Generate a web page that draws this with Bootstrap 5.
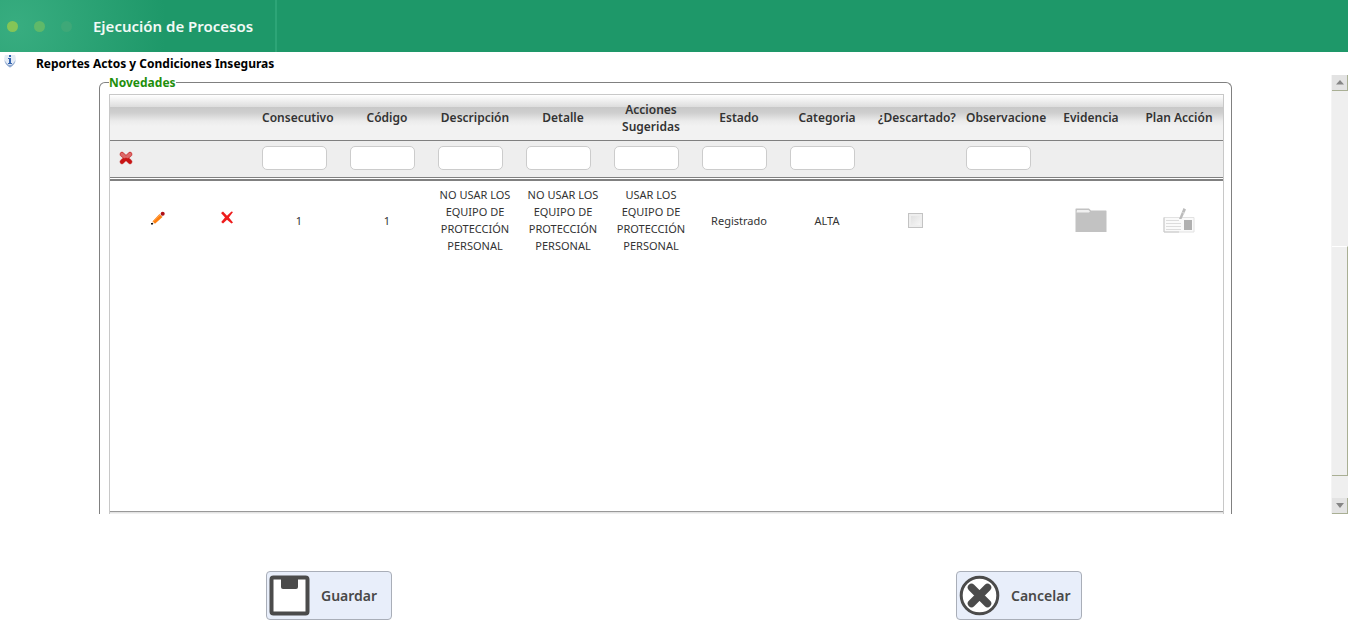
<!DOCTYPE html>
<html lang="es">
<head>
<meta charset="utf-8">
<meta name="viewport" content="width=device-width, initial-scale=1">
<title>Ejecución de Procesos</title>
<link href="https://cdn.jsdelivr.net/npm/bootstrap@5.3.0/dist/css/bootstrap.min.css" rel="stylesheet">
<style>
  body { font-family: "Noto Sans", sans-serif; font-size: 11px; line-height: 17px; color: #333; background: #fff; }
  .topbar { height: 52px; background: radial-gradient(circle at 16px 26px, #38ad80 0, #1e9869 150px); }
  .topbar-brand { width: 277px; border-right: 2px solid #2da577; }
  .topbar-title { font-size: 15px; line-height: 20px; font-weight: 600; color: #f2faf6; margin-left: 20px; }
  .page-strip { height: 23px; }
  .page-title { font-size: 12px; line-height: 17px; font-weight: 700; color: #000; margin: 0 0 0 20px; }
  .scroll-view { padding: 0 99px; min-width: 0; }
  .group { border: 1px solid #808080; border-bottom: 0; border-radius: 6px 6px 0 0; padding: 0 7px 0 9px; margin-top: -1px; }
  .group legend { float: none; width: auto; font-size: 12px; line-height: 17px; font-weight: 700; color: #1f8f0c; padding: 0; margin: 0 0 3px; }
  .grid-box { border: 1px solid #c8c8c8; border-bottom: 0; }
  .grid-end { height: 3px; border-top: 1px solid #999; background: linear-gradient(#ddd, #f8f8f8); }
  .grid-table { table-layout: fixed; width: 100%; border-collapse: separate; border-spacing: 0; text-align: center; }
  .grid-table th, .grid-table td { padding: 0 7px; vertical-align: middle; }
  .col-edit { width: 70px; }
  .col-remove { width: 75px; }
  .grid-head { background: linear-gradient(#fff 0, #ddd 12px, #c8c8c8 12px, #cfcfcf 18px, #ebebeb 26px, #f2f2f2 31px); }
  .grid-head th { height: 46px; border-bottom: 1px solid #808080; font-size: 12px; font-weight: 600; }
  .grid-head .one-line { white-space: nowrap; text-align: left; padding-right: 0; }
  .grid-filter td { height: 37px; background: #eee; border-bottom: 1px solid #808080; text-align: left; padding-bottom: 2px; }
  .grid-filter .clear-cell { padding-left: 9px; }
  .grid-filter input { display: block; width: 65px; height: 24px; padding: 0 6px; font-size: 11px; border: 1px solid #ccc; border-radius: 5px; }
  .grid-row td { height: 78px; }
  .grid-row .tool-cell { padding: 0 0 4px 41px; text-align: left; }
  .grid-body { border-top: 2px solid #808080; margin-top: 1px; }
  .icon-btn { display: block; padding: 0; border: 0; background: none; line-height: 0; }
  .tick { appearance: none; display: block; width: 15px; height: 15px; margin: 0 auto; border: 1px solid #c3c3c3; background: linear-gradient(135deg, #dcdcdc, #fafafa); box-shadow: inset 0 0 0 2px #eee; }
  .rail { width: 17px; background: #efefef; border-left: 1px solid #f4f4f4; }
  .rail-btn, .rail-thumb { border: solid #a9af94; border-width: 0 1px 1px 0; background: #e3e3e3; }
  .rail-btn { height: 16px; padding: 0; }
  .rail-thumb { height: 230px; margin-bottom: 22px; background: #efefef; border-top: 1px solid #fff; }
  .action-bar { height: 126px; padding: 57px 266px 0; }
  .action-btn { width: 126px; height: 49px; padding: 0 0 0 2px; border: 1px solid #a9aeb8; border-radius: 4px; background: #e8eefa; color: #484848; font-size: 14px; line-height: 20px; font-weight: 600; gap: 11px; }
</style>
</head>
<body class="d-flex flex-column min-vh-100">

<header class="topbar d-flex">
  <div class="topbar-brand d-flex align-items-center flex-shrink-0">
    <svg class="flex-shrink-0" width="73" height="12" aria-hidden="true">
      <circle cx="12.500" cy="6.500" r="5.500" fill="#84c557"/>
      <circle cx="39.500" cy="6.500" r="5.500" fill="#5fb969"/>
      <circle cx="66.500" cy="6.500" r="5.500" fill="#3ea878"/>
    </svg>
    <span class="topbar-title">Ejecución de Procesos</span>
  </div>
</header>

<div class="page-strip d-flex align-items-center">
  <svg class="ms-1 mb-1" width="12" height="13" viewBox="0 0 12 13" aria-hidden="true">
    <path d="M1 0Q-1 5 1.500 9Q4 11 6 13Q8 11 10.500 9Q13 5 11 0Z" fill="#e4ecf6"/>
    <path d="M.5 5Q1 10 6 12.500Q11 10 11.500 5Q9 10 6 10Q3 10 .5 5Z" fill="#8fa8cf"/>
    <path d="M5 0H7V2H5ZM4 3H7V8H8V9H4V8H5V4H4Z" fill="#3565b0"/>
  </svg>
  <h1 class="page-title">Reportes Actos y Condiciones Inseguras</h1>
</div>

<main class="flex-grow-1 d-flex">
  <div class="scroll-view flex-grow-1 d-flex flex-column">
    <fieldset class="group flex-grow-1 d-flex flex-column">
      <legend>Novedades</legend>
      <div class="grid-box flex-grow-1 d-flex flex-column">
        <table class="grid-table">
          <colgroup><col class="col-edit"><col class="col-remove"><col span="11"></colgroup>
          <thead>
            <tr class="grid-head">
              <th colspan="2"></th>
              <th class="one-line">Consecutivo</th>
              <th>Código</th>
              <th class="px-0">Descripción</th>
              <th>Detalle</th>
              <th>Acciones Sugeridas</th>
              <th>Estado</th>
              <th>Categoria</th>
              <th class="one-line">¿Descartado?</th>
              <th class="one-line">Observacione</th>
              <th>Evidencia</th>
              <th class="px-0">Plan Acción</th>
            </tr>
            <tr class="grid-filter">
              <td colspan="2" class="clear-cell">
                <button class="icon-btn" type="button" aria-label="Limpiar filtros">
                  <svg width="14" height="14" viewBox="0 0 14 14"><path d="M3 3.200 11 10.800M11 3.200 3 10.800" stroke="#d8a0a0" stroke-width="5" stroke-linecap="round"/><path d="M3 3.200 11 10.800M11 3.200 3 10.800" stroke="#c81414" stroke-width="4" stroke-linecap="round"/><path d="M3 3.200 5.500 5.500M11 3.200 8.500 5.500" stroke="#dc6a6a" stroke-width="3.400" stroke-linecap="round"/></svg>
                </button>
              </td>
              <td><input type="text" aria-label="Consecutivo"></td>
              <td><input type="text" aria-label="Código"></td>
              <td><input type="text" aria-label="Descripción"></td>
              <td><input type="text" aria-label="Detalle"></td>
              <td><input type="text" aria-label="Acciones Sugeridas"></td>
              <td><input type="text" aria-label="Estado"></td>
              <td><input type="text" aria-label="Categoria"></td>
              <td></td>
              <td><input type="text" aria-label="Observaciones"></td>
              <td></td>
              <td></td>
            </tr>
          </thead>
        </table>
        <div class="grid-body flex-grow-1">
          <table class="grid-table">
            <colgroup><col class="col-edit"><col class="col-remove"><col span="11"></colgroup>
            <tbody>
              <tr class="grid-row">
                <td class="tool-cell">
                  <button class="icon-btn" type="button" aria-label="Editar">
                    <svg width="14" height="16" viewBox="0 0 14 16"><path d="M1.500 11.500 8.500 4 11.500 7 4 13.800Z" fill="#ff7f0e"/><path d="M2 11.500 9 5" stroke="#ffa550" stroke-width="1"/><path d="M1.500 11.500 4 13.800 .5 14Z" fill="#ead9c8"/><path d="M0 13H2V14.500H0Z" fill="#111"/><path d="M8.500 4 10.300 3 12.500 5.500 11.500 7Z" fill="#ddd"/><circle cx="11.700" cy="3.800" r="2" fill="#b01016"/></svg>
                  </button>
                </td>
                <td class="tool-cell">
                  <button class="icon-btn" type="button" aria-label="Eliminar">
                    <svg width="12" height="16" viewBox="0 0 12 16"><path d="M0 3 2 1.500 6 5.800 10.500 1.500 12 2 7.900 7.500 12 12.500 10.500 13.500 6 9.700 2 13.500 .2 12 4 7.500Z" fill="#ee1c1c"/></svg>
                  </button>
                </td>
                <td>1</td>
                <td>1</td>
                <td>NO USAR LOS EQUIPO DE PROTECCIÓN PERSONAL</td>
                <td>NO USAR LOS EQUIPO DE PROTECCIÓN PERSONAL</td>
                <td>USAR LOS EQUIPO DE PROTECCIÓN PERSONAL</td>
                <td>Registrado</td>
                <td>ALTA</td>
                <td><input class="tick" type="checkbox" disabled aria-label="¿Descartado?"></td>
                <td></td>
                <td>
                  <button class="icon-btn mx-auto" type="button" aria-label="Evidencia">
                    <svg width="32" height="25" viewBox="0 0 32 25"><path d="M.5 4V1Q.5.5 1 .5H14L16 2.500H31Q31.500 2.500 31.500 3V24H.5Z" fill="#c2c2c2"/><path d="M2 2H13.500L15 3.500 14 4.500H1.500Z" fill="#f0f0f0"/></svg>
                  </button>
                </td>
                <td>
                  <button class="icon-btn mx-auto" type="button" aria-label="Plan Acción">
                    <svg width="32" height="26" viewBox="0 0 32 26"><path d="M1 10.500H31V25H1Z" fill="#fafafa" stroke="#e2e2e2"/><path d="M1 10.500V25H16" fill="none" stroke="#c8c8c8"/><path d="M3 13.500H16M3 16.500H18M3 19.500H18M3 22.500H18" stroke="#dcdcdc"/><path d="M21 13H29V23H21Z" fill="#b0b0b0"/><path d="M16 12 20.500 1 23 2.500 18.500 12Z" fill="#bcbcbc"/><path d="M19.500 5 21.500 7" stroke="#e8e8e8"/></svg>
                  </button>
                </td>
              </tr>
            </tbody>
          </table>
        </div>
        <div class="grid-end"></div>
      </div>
    </fieldset>
  </div>
  <div class="rail d-flex flex-column flex-shrink-0 justify-content-between" aria-hidden="true">
    <button class="rail-btn w-100 d-flex align-items-center justify-content-center" type="button" tabindex="-1"><svg width="8" height="5"><path d="M0 4.500 4 0 8 4.500Z" fill="#858585"/></svg></button>
    <div>
      <div class="rail-thumb"></div>
      <button class="rail-btn w-100 d-flex align-items-center justify-content-center" type="button" tabindex="-1"><svg width="8" height="5"><path d="M0 0H8L4 5Z" fill="#858585"/></svg></button>
    </div>
  </div>
</main>

<footer class="action-bar d-flex justify-content-between">
  <button class="action-btn d-flex align-items-center" type="button">
    <svg width="41" height="41" viewBox="0 0 41 41" aria-hidden="true"><rect x="2.500" y="2.500" width="36" height="36" rx="2" fill="#fff" stroke="#4b4b4b" stroke-width="4"/><path d="M12 3H29V12Q29 14 27 14H14Q12 14 12 12Z" fill="#4b4b4b"/></svg>
    Guardar
  </button>
  <button class="action-btn d-flex align-items-center" type="button">
    <svg width="41" height="41" viewBox="0 0 41 41" aria-hidden="true"><circle cx="20.500" cy="20.500" r="18.300" fill="#fff" stroke="#4b4b4b" stroke-width="3"/><path d="M12.500 12.500 28.500 28.500M28.500 12.500 12.500 28.500" stroke="#4b4b4b" stroke-width="7.500" stroke-linecap="round"/></svg>
    Cancelar
  </button>
</footer>

<script src="https://cdn.jsdelivr.net/npm/bootstrap@5.3.0/dist/js/bootstrap.bundle.min.js"></script>
</body>
</html>
